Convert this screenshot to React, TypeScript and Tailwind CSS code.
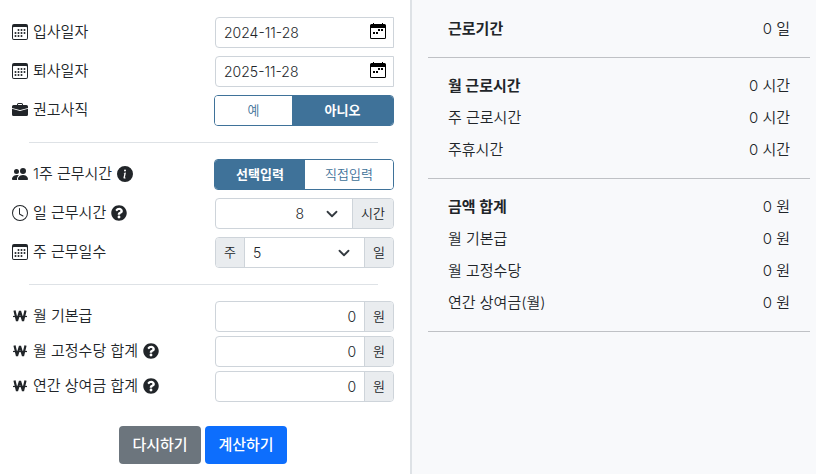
import React, { useState } from 'react';
import {
  BsBriefcaseFill,
  BsCalendar3,
  BsClock,
  BsInfoCircleFill,
  BsPeopleFill,
} from 'react-icons/bs';
import { FaQuestionCircle } from 'react-icons/fa';

const toggleOn = 'bg-[#3f7299] font-bold text-white';
const toggleOff = 'bg-white text-[#3f7299]';

function PickerIcon() {
  return (
    <svg width="16" height="16" viewBox="0 0 16 16" fill="black" aria-hidden="true">
      <path
        fillRule="evenodd"
        d="M3 0h1v1h8V0h1v1h1.500a1.500 1.500 0 0 1 1.500 1.500v12a1.500 1.500 0 0 1-1.500 1.500h-13A1.500 1.500 0 0 1 0 14.500v-12A1.500 1.500 0 0 1 1.500 1H3zM1 5v9.500a.5.5 0 0 0 .5.5h13a.5.5 0 0 0 .5-.5V5z"
      />
      <path d="M11 6h2v2h-2zM8 6h2v2H8zM3 9h2v2H3zM6 9h2v2H6z" />
    </svg>
  );
}

function WonIcon() {
  return (
    <svg width="16" height="16" viewBox="0 0 16 16" fill="none" stroke="currentColor" aria-hidden="true">
      <path strokeWidth="2.200" strokeLinejoin="bevel" d="M2.500 2.500 5 13 8 3l3 10 2.500-10.500" />
      <path strokeWidth="1.200" d="M1 8.500h14" />
    </svg>
  );
}

function Chevron() {
  return (
    <svg
      className="pointer-events-none absolute top-2 right-3.5"
      width="12"
      height="14"
      viewBox="0 0 16 16"
      aria-hidden="true"
    >
      <path fill="none" stroke="#343a40" strokeLinecap="round" strokeLinejoin="round" strokeWidth="2.400" d="m2 5 6 6 6-6" />
    </svg>
  );
}

interface RowProps {
  icon: React.ReactNode;
  label: string;
  htmlFor?: string;
  help?: React.ReactNode;
  children: React.ReactNode;
}

function Row({ icon, label, htmlFor, help, children }: RowProps) {
  return (
    <div className="flex items-start justify-between">
      <div className="flex h-[30px] items-center gap-[5px] text-[15px] leading-6 whitespace-nowrap">
        {icon}
        {htmlFor ? <label htmlFor={htmlFor}>{label}</label> : <span>{label}</span>}
        {help}
      </div>
      {children}
    </div>
  );
}

function DateField({ id, value }: { id: string; value: string }) {
  const [date, setDate] = useState(value);
  return (
    <div className="flex h-[31px] w-[179px] items-center rounded-l border border-[#ced4da] bg-white pr-[7px] pl-2">
      <input
        id={id}
        type="text"
        value={date}
        onChange={(e) => setDate(e.target.value)}
        className="min-w-0 flex-1 text-sm outline-none"
      />
      <button type="button" aria-label="날짜 선택" className="pb-[3px]">
        <PickerIcon />
      </button>
    </div>
  );
}

interface ToggleProps {
  label: string;
  options: string[];
  initial: number;
  columns: string;
}

function Toggle({ label, options, initial, columns }: ToggleProps) {
  const [selected, setSelected] = useState(initial);
  return (
    <div
      role="group"
      aria-label={label}
      className={`grid h-[31px] w-[180px] overflow-hidden rounded border border-[#3f7299] text-[13px] ${columns}`}
    >
      {options.map((option, i) => (
        <button
          key={option}
          type="button"
          aria-pressed={selected === i}
          onClick={() => setSelected(i)}
          className={selected === i ? toggleOn : toggleOff}
        >
          {option}
        </button>
      ))}
    </div>
  );
}

function Addon({ children }: { children: React.ReactNode }) {
  return <span className="flex items-center bg-[#e9ecef] px-2 text-[13px]">{children}</span>;
}

const group =
  'flex h-[31px] w-[179px] divide-x divide-[#ced4da] overflow-hidden rounded border border-[#ced4da] bg-white text-sm';

function MoneyField({ id }: { id: string }) {
  const [amount, setAmount] = useState('0');
  return (
    <div className={group}>
      <input
        id={id}
        type="text"
        inputMode="numeric"
        value={amount}
        onChange={(e) => setAmount(e.target.value)}
        className="min-w-0 flex-1 px-2 text-right outline-none"
      />
      <Addon>원</Addon>
    </div>
  );
}

interface ResultLine {
  name: string;
  value: string;
}

const results: ResultLine[][] = [
  [{ name: '근로기간', value: '0 일' }],
  [
    { name: '월 근로시간', value: '0 시간' },
    { name: '주 근로시간', value: '0 시간' },
    { name: '주휴시간', value: '0 시간' },
  ],
  [
    { name: '금액 합계', value: '0 원' },
    { name: '월 기본급', value: '0 원' },
    { name: '월 고정수당', value: '0 원' },
    { name: '연간 상여금(월)', value: '0 원' },
  ],
];

export default function App() {
  return (
    <div className="flex min-h-screen bg-[#f8f9fb] font-['Inter','Noto_Sans_CJK_KR',sans-serif] font-[350] text-[#212529]">
      <form
        className="w-1/2 min-w-[412px] border-r-2 border-[#dee2e6] bg-white pt-[17px] pr-4 pb-2.5 pl-3"
        onSubmit={(e) => e.preventDefault()}
      >
        <div className="flex flex-col gap-2">
          <Row icon={<BsCalendar3 size={16} />} label="입사일자" htmlFor="start">
            <DateField id="start" value="2024-11-28" />
          </Row>
          <Row icon={<BsCalendar3 size={16} />} label="퇴사일자" htmlFor="end">
            <DateField id="end" value="2025-11-28" />
          </Row>
          <Row icon={<BsBriefcaseFill size={16} />} label="권고사직">
            <Toggle label="권고사직" options={['예', '아니오']} initial={1} columns="grid-cols-[77px_1fr]" />
          </Row>
        </div>

        <hr className="my-4 mr-4 ml-[17px] border-[#dee2e6]" />

        <div className="flex flex-col gap-2">
          <Row icon={<BsPeopleFill size={16} />} label="1주 근무시간" help={<BsInfoCircleFill size={16} />}>
            <Toggle label="1주 근무시간" options={['선택입력', '직접입력']} initial={0} columns="grid-cols-[90px_1fr]" />
          </Row>
          <Row icon={<BsClock size={16} />} label="일 근무시간" htmlFor="hours" help={<FaQuestionCircle size={16} />}>
            <div className={group}>
              <div className="relative flex flex-1">
                <select id="hours" defaultValue="8" className="w-full appearance-none pr-12 text-right outline-none">
                  <option>4</option>
                  <option>6</option>
                  <option>8</option>
                </select>
                <Chevron />
              </div>
              <Addon>시간</Addon>
            </div>
          </Row>
          <Row icon={<BsCalendar3 size={16} />} label="주 근무일수" htmlFor="days">
            <div className={group}>
              <Addon>주</Addon>
              <div className="relative flex flex-1">
                <select id="days" defaultValue="5" className="w-full appearance-none pl-2 outline-none">
                  <option>3</option>
                  <option>4</option>
                  <option>5</option>
                </select>
                <Chevron />
              </div>
              <Addon>일</Addon>
            </div>
          </Row>
        </div>

        <hr className="my-4 mr-4 ml-[17px] border-[#dee2e6]" />

        <div className="flex flex-col gap-1">
          <Row icon={<WonIcon />} label="월 기본급" htmlFor="base">
            <MoneyField id="base" />
          </Row>
          <Row icon={<WonIcon />} label="월 고정수당 합계" htmlFor="allowance" help={<FaQuestionCircle size={16} />}>
            <MoneyField id="allowance" />
          </Row>
          <Row icon={<WonIcon />} label="연간 상여금 합계" htmlFor="bonus" help={<FaQuestionCircle size={16} />}>
            <MoneyField id="bonus" />
          </Row>
        </div>

        <div className="mt-6 flex justify-center gap-1 text-[15px] font-medium text-white">
          <button type="reset" className="h-[38px] w-[82px] rounded bg-[#6c757d]">
            다시하기
          </button>
          <button type="submit" className="h-[38px] w-[82px] rounded bg-[#0d6efd]">
            계산하기
          </button>
        </div>
      </form>

      <section className="flex-1 pt-[13px] pr-1.5 pl-4 text-[15px]">
        {results.map((lines) => (
          <dl key={lines[0].name} className="mb-3 border-b border-[#bfc1c5] px-5 pb-3">
            {lines.map((line, i) => (
              <div key={line.name} className="flex h-8 items-center justify-between">
                <dt className={i === 0 ? 'font-bold' : ''}>{line.name}</dt>
                <dd>{line.value}</dd>
              </div>
            ))}
          </dl>
        ))}
      </section>
    </div>
  );
}
